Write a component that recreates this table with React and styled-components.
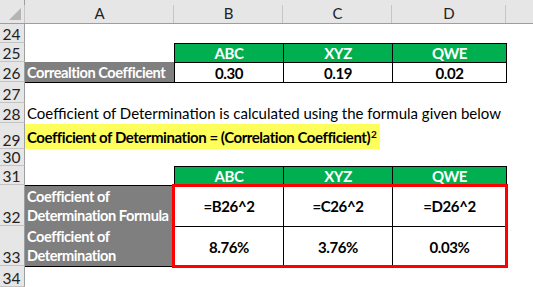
import React from "react";
import styled, { createGlobalStyle } from "styled-components";

const GlobalStyle = createGlobalStyle`
  body {
    margin: 0;
    overflow: hidden;
    background: #ffffff;
    font-family: Lato, "Liberation Sans", sans-serif;
  }
`;

const Sheet = styled.div`
  display: grid;
  grid-template-columns: 25px 149px 109px 109px 114px 27px;
  grid-template-rows: 24px 19px 19px 20px 21px 20px 26px 17px 19px 41px 40px 21px;
  width: 533px;
  height: 287px;
  background: #ffffff;
  font-size: 15px;
  color: #111;
`;

const Corner = styled.div`
  grid-row: 1;
  grid-column: 1;
  position: relative;
  background: #e6e6e6;
  border-right: 1px solid #9e9e9e;
  border-bottom: 1px solid #9e9e9e;

  &::after {
    content: "";
    position: absolute;
    right: 3px;
    bottom: 3px;
    border-style: solid;
    border-width: 0 0 12px 12px;
    border-color: transparent transparent #b4b4b4 transparent;
  }
`;

const ColHead = styled.div`
  grid-row: 1;
  grid-column: ${(p) => p.col};
  display: flex;
  align-items: center;
  justify-content: center;
  background: #e6e6e6;
  border-bottom: 1px solid #9e9e9e;
  position: relative;
  color: #222;
  padding-top: 3px;

  &::before {
    content: "";
    position: absolute;
    left: -1px;
    top: 5px;
    bottom: 0;
    width: 1px;
    background: #c6c6c6;
  }
`;

const RowHead = styled.div`
  grid-column: 1;
  grid-row: ${(p) => p.row};
  display: flex;
  align-items: flex-end;
  justify-content: center;
  background: #e6e6e6;
  border-right: 1px solid #9e9e9e;
  border-bottom: 1px solid #c4c4c4;
  color: #222;
  font-size: 15.5px;
  line-height: 16px;
  padding-right: 1px;
`;

const HeadCell = styled.div`
  grid-row: ${(p) => p.row};
  grid-column: ${(p) => p.col};
  display: flex;
  align-items: center;
  justify-content: center;
  background: #00b050;
  color: #ffffff;
  font-weight: 700;
  letter-spacing: -0.4px;
  border: 1px solid #000;
  margin: 0 -1px -1px 0;
`;

const ValueCell = styled.div`
  grid-row: ${(p) => p.row};
  grid-column: ${(p) => p.col};
  display: flex;
  align-items: center;
  justify-content: center;
  color: #000;
  font-weight: 700;
  letter-spacing: -0.4px;
  border: 1px solid #000;
  margin: 0 -1px -1px 0;
`;

const LabelCell = styled.div`
  grid-row: ${(p) => p.row};
  grid-column: 2;
  display: flex;
  align-items: ${(p) => (p.wrap ? "flex-end" : "center")};
  background: #7f7f7f;
  color: #ffffff;
  font-weight: 700;
  font-size: 14.6px;
  letter-spacing: -0.45px;
  padding: 0 0 ${(p) => (p.wrap ? "1px" : "0")} 2px;
  border-top: ${(p) => (p.top ? "1px solid #000" : "none")};
  border-bottom: 1px solid #000;
  margin-bottom: -1px;
  line-height: 19px;
  white-space: nowrap;
`;

const TextRow = styled.div`
  grid-row: ${(p) => p.row};
  grid-column: 2 / 7;
  display: flex;
  align-items: ${(p) => (p.stretch ? "stretch" : "center")};
  padding-left: 2px;
  color: #000;
  white-space: nowrap;
`;

const Highlight = styled.span`
  display: inline-flex;
  align-items: center;
  margin-left: -2px;
  padding: 0 4px 0 2px;
  background: #ffff5c;
  font-weight: 700;
  letter-spacing: -0.45px;
  margin-top: 1px;
`;

const Sup = styled.sup`
  font-size: 10px;
  line-height: 0;
  position: relative;
  top: -3px;
  margin-left: 1px;
`;

const RedFrame = styled.div`
  grid-row: 10 / 12;
  grid-column: 3 / 6;
  margin: -1px -2px -2px -2px;
  border: 3px solid #ff0000;
  pointer-events: none;
  z-index: 2;
`;

const columns = ["A", "B", "C", "D", ""];
const rowNumbers = [24, 25, 26, 27, 28, 29, 30, 31, 32, 33, 34];
const names = ["ABC", "XYZ", "QWE"];
const correlation = ["0.30", "0.19", "0.02"];
const formulas = ["=B26^2", "=C26^2", "=D26^2"];
const results = ["8.76%", "3.76%", "0.03%"];

export default function App() {
  return (
    <>
      <GlobalStyle />
      <Sheet>
        <Corner />
        {columns.map((c, i) => (
          <ColHead key={i} col={i + 2}>
            {c}
          </ColHead>
        ))}
        {rowNumbers.map((n, i) => (
          <RowHead key={n} row={i + 2}>
            {n}
          </RowHead>
        ))}

        {names.map((n, i) => (
          <HeadCell key={"h1" + n} row={3} col={i + 3}>
            {n}
          </HeadCell>
        ))}
        <LabelCell row={4}>Correaltion Coefficient</LabelCell>
        {correlation.map((v, i) => (
          <ValueCell key={"c" + i} row={4} col={i + 3}>
            {v}
          </ValueCell>
        ))}

        <TextRow row={6}>
          Coefficient of Determination is calculated using the formula given below
        </TextRow>
        <TextRow row={7} stretch>
          <Highlight>
            Coefficient of Determination = (Correlation Coefficient)<Sup>2</Sup>
          </Highlight>
        </TextRow>

        {names.map((n, i) => (
          <HeadCell key={"h2" + n} row={9} col={i + 3}>
            {n}
          </HeadCell>
        ))}
        <LabelCell row={10} wrap top>
          Coefficient of
          <br />
          Determination Formula
        </LabelCell>
        {formulas.map((v, i) => (
          <ValueCell key={"f" + i} row={10} col={i + 3}>
            {v}
          </ValueCell>
        ))}
        <LabelCell row={11} wrap>
          Coefficient of
          <br />
          Determination
        </LabelCell>
        {results.map((v, i) => (
          <ValueCell key={"r" + i} row={11} col={i + 3}>
            {v}
          </ValueCell>
        ))}
        <RedFrame />
      </Sheet>
    </>
  );
}
